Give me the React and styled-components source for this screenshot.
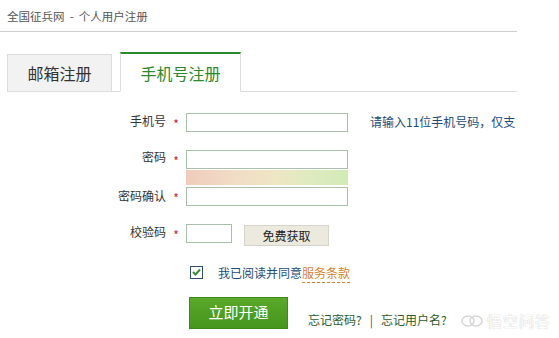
import React from "react";
import styled, { createGlobalStyle } from "styled-components";

const Global = createGlobalStyle`
  html, body { margin: 0; padding: 0; background: #fff; }
  body { font-family: "Noto Sans CJK SC", "Liberation Sans", sans-serif; font-size: 12px; color: #333; overflow: hidden; }
`;

const Page = styled.div`
  width: 559px;
  height: 338px;
  position: relative;
  overflow: hidden;
`;

const Header = styled.div`
  width: 517px;
  height: 32px;
  border-bottom: 1px solid #cfcfcf;
  box-sizing: border-box;
  padding: 8px 0 0 7px;
  font-size: 11.5px;
  line-height: 16px;
  color: #555;
  white-space: pre;
`;

const Tabs = styled.div`
  display: flex;
  align-items: flex-end;
  gap: 8px;
  margin: 20px 0 0 7px;
  width: 510px;
  height: 40px;
  border-bottom: 1px solid #dcdcdc;
  box-sizing: border-box;
`;

const Tab = styled.div`
  box-sizing: border-box;
  height: ${(p) => (p.$active ? "40px" : "38px")};
  width: ${(p) => (p.$active ? "121px" : "105px")};
  margin-bottom: -1px;
  display: flex;
  align-items: center;
  justify-content: center;
  font-size: 16px;
  border: 1px solid #dcdcdc;
  border-top: ${(p) => (p.$active ? "2px solid #2b8a2b" : "1px solid #dcdcdc")};
  border-bottom: ${(p) => (p.$active ? "1px solid #fff" : "1px solid #dcdcdc")};
  background: ${(p) => (p.$active ? "#fff" : "#f2f2f2")};
  color: ${(p) => (p.$active ? "#2b8a2b" : "#333")};
  padding-top: ${(p) => (p.$active ? "1px" : "0")};
`;

const Form = styled.div`
  display: flex;
  flex-direction: column;
  padding-top: 21px;
`;

const Row = styled.div`
  display: flex;
  align-items: flex-start;
  margin-top: ${(p) => p.$mt || 0}px;
`;

const Label = styled.div`
  width: 166px;
  text-align: right;
  font-size: 12px;
  color: #333;
  line-height: 16px;
  margin-top: ${(p) => p.$mt || 0}px;
`;

const Star = styled.div`
  width: 20px;
  text-align: center;
  color: #c0282d;
  font-size: 12px;
  line-height: 19px;
  padding-top: 1px;
`;

const Input = styled.div`
  box-sizing: border-box;
  width: ${(p) => p.$w || 162}px;
  height: 19px;
  border: 1px solid #a9bfa9;
  background: #fff;
`;

const Hint = styled.div`
  margin-left: 22px;
  margin-top: 1px;
  white-space: nowrap;
  color: #1d4b78;
  font-size: 12px;
  line-height: 16px;
`;

const Strength = styled.div`
  margin-left: 186px;
  width: 162px;
  height: 15px;
  margin-bottom: 2px;
  background: linear-gradient(90deg, #f0ccbd 0%, #f1dcc6 30%, #efe6c4 55%, #dcebbf 80%, #d2ebb6 100%);
`;

const GetBtn = styled.div`
  box-sizing: border-box;
  margin-left: 12px;
  width: 85px;
  height: 21px;
  margin-top: 1px;
  background: #ece9df;
  border: 1px solid #d6d3ca;
  display: flex;
  align-items: center;
  justify-content: center;
  font-size: 12px;
  color: #222;
`;

const AgreeRow = styled.div`
  display: flex;
  align-items: center;
  margin-left: 190px;
  margin-top: 19px;
  height: 14px;
`;

const Check = styled.div`
  box-sizing: border-box;
  width: 13px;
  height: 13px;
  border: 1px solid #2d4e6e;
  background: #fff;
  display: flex;
  align-items: center;
  justify-content: center;
`;

const AgreeText = styled.span`
  margin-left: 15px;
  color: #1d4b78;
  font-size: 12px;
`;

const Terms = styled.span`
  color: #d9822b;
  border-bottom: 1px dashed #d9822b;
  padding-bottom: 1px;
`;

const SubmitRow = styled.div`
  display: flex;
  align-items: flex-end;
  margin-left: 189px;
  margin-top: 18px;
`;

const Submit = styled.div`
  width: 99px;
  height: 32px;
  box-sizing: border-box;
  border: 1px solid #3e8a19;
  background: linear-gradient(#5aa92a, #46951d);
  color: #fff;
  font-size: 15px;
  display: flex;
  align-items: center;
  justify-content: center;
  padding-bottom: 4px;
`;

const Links = styled.div`
  margin-left: 20px;
  margin-bottom: 1px;
  color: #2c5a2c;
  font-size: 12px;
  display: flex;
  align-items: center;
  gap: 8px;
`;

const Sep = styled.span`
  color: #555;
`;

const Watermark = styled.div`
  position: absolute;
  right: 8px;
  bottom: 7px;
  display: flex;
  align-items: center;
  gap: 4px;
  color: #fff;
  font-size: 15px;
  letter-spacing: 1px;
  text-shadow: 0 0 1px #c4c4c4, 0 0 1px #c4c4c4;
  opacity: 0.8;
`;

export default function App() {
  return (
    <Page>
      <Global />
      <Header>{"全国征兵网  -  个人用户注册"}</Header>
      <Tabs>
        <Tab>邮箱注册</Tab>
        <Tab $active>手机号注册</Tab>
      </Tabs>
      <Form>
        <Row>
          <Label>手机号</Label>
          <Star>*</Star>
          <Input />
          <Hint>请输入11位手机号码，仅支</Hint>
        </Row>
        <Row $mt={17}>
          <Label $mt={-1}>密码</Label>
          <Star>*</Star>
          <Input />
        </Row>
        <Strength />
        <Row>
          <Label $mt={1}>密码确认</Label>
          <Star>*</Star>
          <Input />
        </Row>
        <Row $mt={17}>
          <Label>校验码</Label>
          <Star>*</Star>
          <Input $w={46} />
          <GetBtn>免费获取</GetBtn>
        </Row>
        <AgreeRow>
          <Check>
            <svg width="9" height="8" viewBox="0 0 9 8">
              <path d="M1 4 L3.5 6.5 L8 1.5" stroke="#3a8a3a" strokeWidth="2" fill="none" />
            </svg>
          </Check>
          <AgreeText>
            我已阅读并同意<Terms>服务条款</Terms>
          </AgreeText>
        </AgreeRow>
        <SubmitRow>
          <Submit>立即开通</Submit>
          <Links>
            <span>忘记密码?</span>
            <Sep>|</Sep>
            <span>忘记用户名?</span>
          </Links>
        </SubmitRow>
      </Form>
      <Watermark>
        <svg width="22" height="14" viewBox="0 0 22 14">
          <ellipse cx="7" cy="7" rx="6" ry="5" fill="none" stroke="#ccc" strokeWidth="1.5" />
          <ellipse cx="15" cy="7" rx="6" ry="5" fill="none" stroke="#ccc" strokeWidth="1.5" />
        </svg>
        悟空问答
      </Watermark>
    </Page>
  );
}
